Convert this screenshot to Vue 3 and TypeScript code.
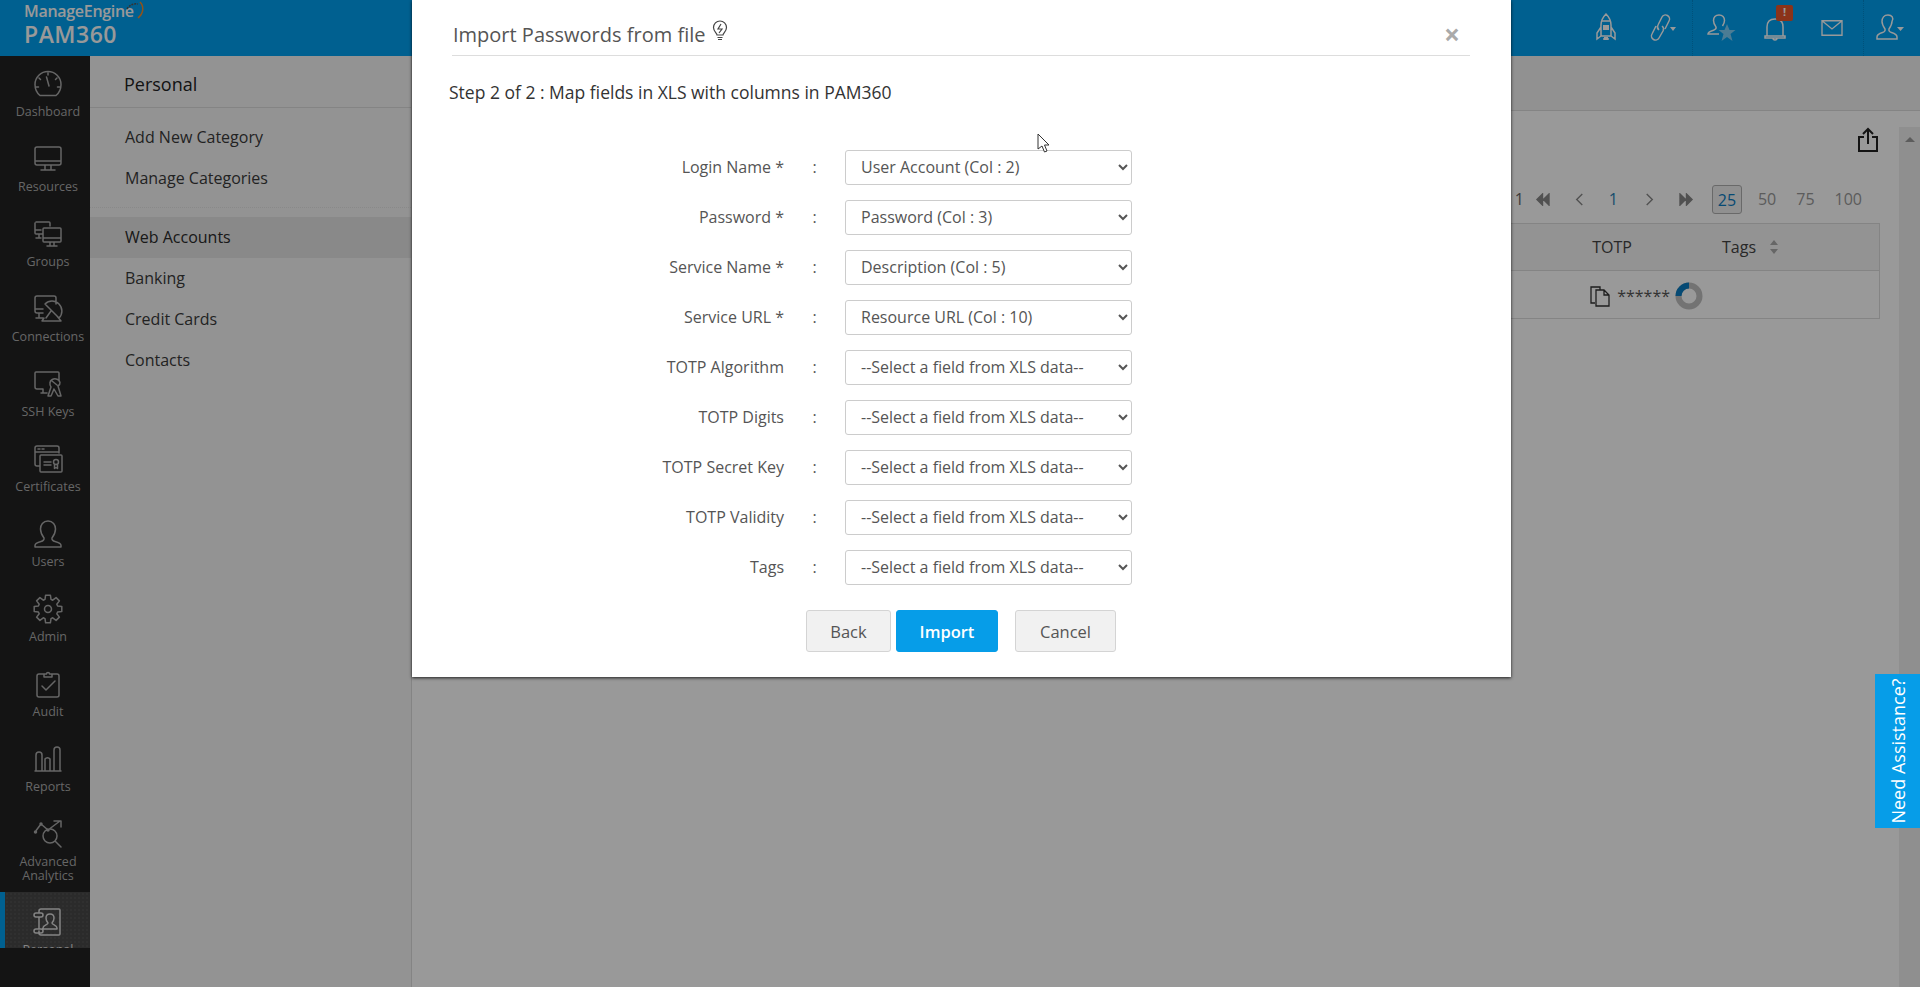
<script setup lang="ts">
interface NavItem {
  label: string;
  icon: string;
  active?: boolean;
}

// eight tooth cog, built from polar points so the teeth stay even
function gearPath(cx: number, cy: number, outer: number, inner: number): string {
  const pts: string[] = [];
  for (let i = 0; i < 8; i++) {
    const a = (i * Math.PI) / 4;
    const steps: [number, number][] = [
      [inner, a - 0.3],
      [outer, a - 0.17],
      [outer, a + 0.17],
      [inner, a + 0.3],
    ];
    for (const [r, t] of steps) {
      pts.push(`${(cx + r * Math.sin(t)).toFixed(1)} ${(cy - r * Math.cos(t)).toFixed(1)}`);
    }
  }
  return "M" + pts.join("L") + "Z";
}

const circle = (cx: number, cy: number, r: number) =>
  `M${cx - r} ${cy}a${r} ${r} 0 1 0 ${2 * r} 0a${r} ${r} 0 1 0 ${-2 * r} 0z`;

const navItems: NavItem[] = [
  {
    label: "Dashboard",
    icon: "M7 26.5h16c3-2.5 5-6.500 5-11C28 8 22 2.500 15 2.500S2 8 2 15.500c0 4.500 2 8.500 5 11zM13.500 8l2.500 9M15 4v2M6 9l1.500 1.500M24 9l-1.500 1.500M3.500 18h2M24.500 18h2",
  },
  {
    label: "Resources",
    icon: "M4 3h22a2 2 0 0 1 2 2v14a2 2 0 0 1-2 2H4a2 2 0 0 1-2-2V5a2 2 0 0 1 2-2zM2 17h26M12 21v4M18 21v4M8 26h14",
  },
  {
    label: "Groups",
    icon: "M3 3h13a1 1 0 0 1 1 1v3M9 15H3a1 1 0 0 1-1-1V4M2 11h6M6 15v3M3 19h5M11 9h16a1 1 0 0 1 1 1v12a1 1 0 0 1-1 1H11a1 1 0 0 1-1-1V10a1 1 0 0 1 1-1zM10 19h18M17 23v3M21 23v3M14 27h10",
  },
  {
    label: "Connections",
    icon: "M10 19H4a2 2 0 0 1-2-2V4a2 2 0 0 1 2-2h17a2 2 0 0 1 2 2v6M2 15h8M6 19v4M3 24h7M12 10l14 14a9.500 9.500 0 0 0-14-14zM18 17l-5 7M11 24l-2 3h19l-4-5",
  },
  {
    label: "SSH Keys",
    icon: "M10 20H4a2 2 0 0 1-2-2V4a1 1 0 0 1 1-1h22a1 1 0 0 1 1 1v8M8 24h6M10 20v4M17 14a5 4 0 1 1 8 3l3 10h-3l-4-7-3 7h-3l3-9a5 5 0 0 1-1-4zM19 12l5 4",
  },
  {
    label: "Certificates",
    icon: "M7 22H4a2 2 0 0 1-2-2V4a2 2 0 0 1 2-2h20a2 2 0 0 1 2 2v5M2 8h24M5 5h2M9 5h2M8 11h20a1 1 0 0 1 1 1v15a1 1 0 0 1-1 1H8a1 1 0 0 1-1-1V12a1 1 0 0 1 1-1zM11 18h7M11 21h7" +
      circle(23, 18, 2.5) + "M21.500 20.500v4l1.500-1 1.500 1v-4",
  },
  {
    label: "Users",
    icon: "M15 2c-5 0-7.500 4-7.500 8 0 4 2 7 3.500 9 .5 1.500-1 3-3 3.500-4 1-6 2.500-6 4v1.500h26V26.500c0-1.500-2-3-6-4-2-.5-3.500-2-3-3.500 1.500-2 3.500-5 3.500-9 0-4-2.500-8-7.500-8z",
  },
  {
    label: "Admin",
    icon: gearPath(15, 15, 14, 10) + circle(15, 15, 3.5),
  },
  {
    label: "Audit",
    icon: "M11 5H6a2 2 0 0 0-2 2v19a2 2 0 0 0 2 2h18a2 2 0 0 0 2-2V7a2 2 0 0 0-2-2h-5M11 8h8V5h-2.500a1.500 1.500 0 0 0-3 0H11zM9 17l4 4 9-9",
  },
  {
    label: "Reports",
    icon: "M3 27V11a3 3 0 0 1 6 0v16zM12 27V15a3 3 0 0 1 5 0v12zM21 27V6a3 3 0 0 1 6 0v21zM2 27h26",
  },
  {
    label: "Advanced Analytics",
    icon: "M2 13l6-8 7 6 12-9M21 2h7v6" + circle(17, 17, 7) + "M22 22l6 6" + circle(2.500, 13, 1) + circle(8, 5, 1) + circle(15, 11, 1),
  },
  {
    label: "Personal",
    active: true,
    icon: "M6 6V4a2 2 0 0 1 2-2h18a1 1 0 0 1 1 1v24a1 1 0 0 1-1 1H8a2 2 0 0 1-2-2v-2M6 10v12M3 6h5a2 2 0 0 1 0 4H3a2 2 0 0 1 0-4zM3 22h5a2 2 0 0 1 0 4H3a2 2 0 0 1 0-4zM17 7c-3 0-4 2-4 4 0 2 1 4 2 5 0 2-5 2-5 5v1h14v-1c0-3-5-3-5-5 1-1 2-3 2-5 0-2-1-4-4-4z",
  },
];

const topMenu = ["Add New Category", "Manage Categories"];
const categories = ["Web Accounts", "Banking", "Credit Cards", "Contacts"];

const placeholder = "--Select a field from XLS data--";
const fields = [
  { label: "Login Name *", value: "User Account (Col : 2)" },
  { label: "Password *", value: "Password (Col : 3)" },
  { label: "Service Name *", value: "Description (Col : 5)" },
  { label: "Service URL *", value: "Resource URL (Col : 10)" },
  { label: "TOTP Algorithm", value: placeholder },
  { label: "TOTP Digits", value: placeholder },
  { label: "TOTP Secret Key", value: placeholder },
  { label: "TOTP Validity", value: placeholder },
  { label: "Tags", value: placeholder },
];
</script>

<template>
  <div class="app">
    <header class="topbar">
      <div class="logo">
        <div class="logo-me">ManageEngine<svg class="logo-arc" viewBox="0 0 20 20"><path d="M2 8Q6 2 13 3" stroke="#555" stroke-dasharray="2 1" /><path d="M15 1C19 5 19 12 13 17" stroke="#f08a2c" /></svg></div>
        <div class="logo-pam">PAM360</div>
      </div>
      <div class="top-icons">
        <svg class="ti" viewBox="0 0 30 30"><path d="M15 1c-3 3-5 7-5 11v11h10V12c0-4-2-8-5-11zM10 14l-4 6v6l4-3M20 14l4 6v6l-4-3M12 26h6M11 8h8" /><path class="fillw" d="M12 12h6v5h-6zM13 24h4v3h-4z" /></svg>
        <svg class="ti link" viewBox="0 0 30 30">
          <path d="M14 13a4 4 0 0 1 1 5l-4 7a4 4 0 0 1-7-4l4-8M11 17a4 4 0 0 1-1-5l4-8a4 4 0 0 1 7 4l-4 8" />
          <path class="caret" d="M22 14h6l-3 4z" />
        </svg>
        <i class="dots"></i>
        <svg class="ti star-user" viewBox="0 0 30 30"><path d="M12 2c-3.500 0-5.500 2.500-5.500 5.500 0 3 1.500 5 2.500 6.500.5 1.500-.5 2.500-2.500 3.200C3 18.300 1 19.500 1 21h11M17.500 7.500C17.500 4.500 15.500 2 12 2M17.500 7.500c0 2-1 4-2 5.500" /><path class="star" d="M20 11l2.500 6h6l-5 4 2 7-5.500-4-5.500 4 2-7-5-4h6z" /></svg>
        <div class="bell">
          <svg class="ti" viewBox="0 0 30 30"><path d="M7 23v-9c0-5 3-8 8-8s8 3 8 8v9zM5 23h20v2H5zM13 25a2 2 0 0 0 4 0" /></svg>
          <span class="badge">!</span>
        </div>
        <svg class="ti mail" viewBox="0 0 26 22"><path d="M2 3h22v16H2zM2 3l11 9 11-9" /></svg>
        <i class="dots second"></i>
        <svg class="ti last" viewBox="0 0 30 30"><path d="M12 2C8 2 6 5 6 8.500c0 3 2 6 3 7.500.5 1.500-.5 3-2.500 3.500C3 20.500 1 22 1 24v2h20v-2c0-2-2-3.500-5.500-4.500-2-.5-3-2-2.500-3.500 1-1.500 3-4.500 3-7.500C18 5 16 2 12 2z" /><path class="caret" d="M21 14h7l-3.500 4z" /></svg>
      </div>
    </header>

    <div class="body">
      <aside class="sidebar">
        <nav class="nav">
          <a v-for="item in navItems" :key="item.label" class="nav-item" :class="{ active: item.active }">
            <svg class="nav-icon" viewBox="0 0 30 30"><path :d="item.icon" /></svg>
            <span class="nav-label">{{ item.label }}</span>
          </a>
        </nav>
      </aside>

      <section class="submenu">
        <h2 class="sub-title">Personal</h2>
        <div class="sub-group">
          <a v-for="m in topMenu" :key="m" class="sub-item">{{ m }}</a>
        </div>
        <div class="sub-cats">
          <a v-for="(c, i) in categories" :key="c" class="sub-item" :class="{ selected: i === 0 }">{{ c }}</a>
        </div>
      </section>

      <main class="main">
        <div class="strip"></div>
        <div class="content">
          <div class="work">
            <div class="toolbar">
              <svg class="export" viewBox="0 0 22 26"><path d="M7 10H2v14h18V10h-5M11 17V2M6 7l5-5 5 5" /></svg>
            </div>
            <div class="pager">
              <span class="pg-count">1</span>
              <svg class="pg-icon" viewBox="0 0 16 14"><path d="M8 1L2 7l6 6zM15 1L9 7l6 6z" /></svg>
              <svg class="pg-icon" viewBox="0 0 16 14"><path d="M11 1L5 7l6 6" fill="none" /></svg>
              <span class="pg-num">1</span>
              <svg class="pg-icon" viewBox="0 0 16 14"><path d="M5 1l6 6-6 6" fill="none" /></svg>
              <svg class="pg-icon" viewBox="0 0 16 14"><path d="M1 1l6 6-6 6zM8 1l6 6-6 6z" /></svg>
              <span class="pg-size current">25</span>
              <span class="pg-size">50</span>
              <span class="pg-size">75</span>
              <span class="pg-size">100</span>
            </div>
            <div class="table">
              <div class="thead">
                <span class="th-totp">TOTP</span>
                <span class="th-tags">Tags</span>
                <svg class="sort" viewBox="0 0 10 16"><path d="M5 1l4 5H1zM5 15l4-5H1z" /></svg>
              </div>
              <div class="trow">
                <svg class="copy" viewBox="0 0 22 22"><path d="M5 18H1V2h9v3M6 5h8l5 5v11H6zM14 5v5h5" /></svg>
                <span class="stars">******</span>
                <svg class="donut" viewBox="0 0 28 28">
                  <circle cx="14" cy="14" r="10.500" class="donut-bg" />
                  <path d="M3.500 14A10.500 10.500 0 0 1 14 3.500" class="donut-val" />
                </svg>
              </div>
            </div>
          </div>
          <div class="scrollbar"><i class="scroll-up"></i></div>
        </div>
      </main>
    </div>

    <div class="overlay"></div>

    <div class="modal">
      <div class="modal-head">
        <span class="modal-title">Import Passwords from file</span>
        <svg class="bulb" viewBox="0 0 16 21"><path d="M5 15c0-2-3.500-3.500-3.500-7.500a6.500 6.500 0 0 1 13 0C14.500 11.500 11 13 11 15zM5.500 17.500h5M6 19.500h4" /><path class="bolt" d="M9 4L6 9h4l-3 4" /></svg>
        <span class="close">&times;</span>
      </div>
      <p class="step">Step 2 of 2 : Map fields in XLS with columns in PAM360</p>
      <form class="form" @submit.prevent>
        <div v-for="f in fields" :key="f.label" class="row">
          <label class="row-label">{{ f.label }}</label>
          <span class="row-colon">:</span>
          <select class="row-select" :value="f.value">
            <option>{{ f.value }}</option>
          </select>
        </div>
        <div class="actions">
          <button type="button" class="btn">Back</button>
          <button type="button" class="btn primary">Import</button>
          <button type="button" class="btn cancel">Cancel</button>
        </div>
      </form>
    </div>

    <div class="assist"><span>Need Assistance?</span></div>

    <svg class="cursor" viewBox="0 0 14 20"><path d="M1 1v15l4-3 2.500 6 2.500-1-2.500-6H12z" /></svg>
  </div>
</template>

<style>
html,
body {
  margin: 0;
  height: 100%;
  overflow: hidden;
}
</style>

<style scoped>
.app {
  position: relative;
  width: 100%;
  height: 987px;
  display: flex;
  flex-direction: column;
  overflow: hidden;
  font-family: "Open Sans", "Liberation Sans", sans-serif;
  color: #333;
  background: #fff;
}

.topbar {
  height: 56px;
  flex: none;
  background: #00a0f0;
  display: flex;
  justify-content: space-between;
  color: #fff;
}
.logo {
  padding: 1px 0 0 24px;
}
.logo-me {
  position: relative;
  font-size: 16px;
  font-weight: 600;
  line-height: 20px;
  letter-spacing: -0.3px;
}
.logo-arc {
  position: absolute;
  left: 101px;
  top: 0;
  width: 20px;
  height: 20px;
  fill: none;
  stroke-width: 1.500;
}
.logo-pam {
  font-size: 23px;
  font-weight: 600;
  line-height: 26px;
  letter-spacing: 0.5px;
}
.top-icons {
  display: flex;
  align-items: center;
  padding-right: 14px;
}
.ti {
  width: 30px;
  height: 30px;
  fill: none;
  stroke: #fff;
  stroke-width: 1.500;
  margin-left: 27px;
}
.ti .caret {
  fill: #fff;
  stroke: none;
}
.ti .fillw {
  fill: #fff;
  stroke: none;
}
.ti .star {
  fill: #7fcff7;
  stroke: none;
}
.ti.mail {
  width: 24px;
  height: 20px;
  margin-left: 30px;
}
.ti.star-user {
  margin-left: 14px;
}
.ti.last {
  margin-left: 12px;
}
.dots {
  width: 0;
  height: 56px;
  margin-left: 14px;
  border-left: 1px dotted #0088cc;
}
.dots.second {
  margin-left: 19px;
}
.bell {
  position: relative;
  display: flex;
  margin-left: 23px;
}
.bell .ti {
  margin-left: 0;
}
.badge {
  position: absolute;
  left: 16px;
  top: -8px;
  width: 17px;
  height: 16px;
  border-radius: 2px;
  background: #e8552a;
  color: #fff;
  font-size: 11px;
  font-weight: 700;
  line-height: 13px;
  text-align: center;
}

.body {
  flex: 1;
  min-height: 0;
  display: flex;
}

.sidebar {
  width: 90px;
  flex: none;
  background: #222;
}
.nav {
  height: 892px;
  overflow: hidden;
}
.nav-item {
  display: flex;
  flex-direction: column;
  align-items: center;
  box-sizing: border-box;
  min-height: 75px;
  padding: 13px 0 9px 6px;
  color: #aaa;
}
.nav-item.active {
  background: radial-gradient(#505050 1px, #484848 1px) 0 0 / 4px 4px;
  border-left: 5px solid #00a0f0;
  padding-top: 15px;
  padding-left: 1px;
  color: #ddd;
}
.nav-icon {
  width: 30px;
  height: 30px;
  fill: none;
  stroke: currentColor;
  stroke-width: 1.500;
  stroke-linejoin: round;
  stroke-linecap: round;
}
.nav-label {
  margin-top: 6px;
  width: 84px;
  font-size: 12.500px;
  line-height: 14px;
  text-align: center;
}

.submenu {
  width: 322px;
  flex: none;
  box-sizing: border-box;
  background: #f5f5f5;
  border-right: 1px solid #ddd;
}
.sub-title {
  margin: 0;
  height: 51px;
  padding-left: 34px;
  border-bottom: 1px solid #ddd;
  font-size: 18px;
  font-weight: 400;
  line-height: 57px;
  color: #222;
}
.sub-group {
  padding: 9px 0 8px;
  border-bottom: 1px dotted #e4e4e4;
}
.sub-cats {
  padding-top: 9px;
}
.sub-item {
  display: block;
  height: 41px;
  padding-left: 35px;
  font-size: 16px;
  line-height: 40px;
  color: #3a3a3a;
}
.sub-item.selected {
  background: #e4e4e4;
  color: #2a2a2a;
}

.main {
  flex: 1;
  min-width: 0;
  display: flex;
  flex-direction: column;
}
.strip {
  height: 54px;
  flex: none;
  background: #f2f2f2;
  border-bottom: 1px solid #ddd;
}
.content {
  flex: 1;
  display: flex;
  min-height: 0;
}
.work {
  flex: 1;
  min-width: 0;
  padding: 16px 19px 0 0;
}
.toolbar {
  display: flex;
  justify-content: flex-end;
  height: 57px;
  padding-right: 1px;
}
.export {
  width: 22px;
  height: 26px;
  fill: none;
  stroke: #222;
  stroke-width: 2;
}
.pager {
  display: flex;
  justify-content: flex-end;
  align-items: center;
  height: 30px;
  padding-right: 18px;
  font-size: 16px;
  color: #999;
}
.pg-count {
  color: #666;
  margin-right: 11px;
}
.pg-icon {
  width: 15px;
  height: 13px;
  fill: #888;
  stroke: #888;
  stroke-width: 1.500;
  margin-right: 22px;
}
.pg-num {
  color: #2a80b5;
  margin-right: 24px;
}
.pg-size {
  margin-left: 20px;
}
.pg-size.current {
  margin-left: -4px;
  width: 30px;
  height: 29px;
  box-sizing: border-box;
  border: 1px solid #b0b0b0;
  border-radius: 3px;
  background: #f0f0f0;
  color: #0b7cc1;
  line-height: 28px;
  text-align: center;
}
.pg-size.current + .pg-size {
  margin-left: 16px;
}
.table {
  margin-top: 9px;
  border: 1px solid #ddd;
}
.thead {
  height: 46px;
  background: #f5f5f5;
  border-bottom: 1px solid #ddd;
  display: flex;
  align-items: center;
  justify-content: flex-end;
  font-size: 16px;
  color: #444;
}
.th-totp {
  margin-right: 90px;
}
.th-tags {
  margin-right: 13px;
}
.sort {
  width: 10px;
  height: 16px;
  fill: #aaa;
  margin-right: 100px;
}
.trow {
  height: 47px;
  box-sizing: border-box;
  padding: 2px 176px 0 0;
  display: flex;
  align-items: center;
  justify-content: flex-end;
}
.copy {
  width: 22px;
  height: 22px;
  fill: none;
  stroke: #333;
  stroke-width: 1.300;
}
.stars {
  margin: 0 5px;
  font-size: 16px;
  color: #555;
}
.donut {
  width: 28px;
  height: 28px;
  fill: none;
  stroke-width: 6;
}
.donut-bg {
  stroke: #c0c0c0;
}
.donut-val {
  stroke: #0b7cc1;
}
.scrollbar {
  width: 21px;
  flex: none;
  margin-top: 16px;
  background: #eee;
  display: flex;
  justify-content: center;
}
.scroll-up {
  margin-top: 10px;
  width: 0;
  height: 0;
  border: 5px solid transparent;
  border-top: 0;
  border-bottom: 5px solid #999;
}

.overlay {
  position: absolute;
  inset: 0;
  background: rgba(0, 0, 0, 0.4);
}

.modal {
  position: absolute;
  left: 412px;
  top: 0;
  width: 1099px;
  height: 677px;
  box-sizing: border-box;
  padding: 0 41px 0 37px;
  background: #fff;
  box-shadow: 0 1px 3px rgba(0, 0, 0, 0.8);
}
.modal-head {
  display: flex;
  align-items: center;
  box-sizing: border-box;
  height: 56px;
  padding-top: 13px;
  margin-left: 3px;
  border-bottom: 1px solid #ddd;
}
.modal-title {
  margin-left: 1px;
  font-size: 20px;
  color: #555;
}
.bulb {
  width: 16px;
  height: 21px;
  margin: -8px 0 0 7px;
  fill: none;
  stroke: #444;
  stroke-width: 1.200;
}
.close {
  margin-left: auto;
  margin-right: 10px;
  font-size: 28px;
  line-height: 28px;
  font-weight: 700;
  color: #aaa;
}
.step {
  margin: 24px 0 0;
  font-size: 17.500px;
  line-height: 24px;
  color: #333;
}
.form {
  margin-top: 38px;
}
.row {
  display: flex;
  align-items: center;
  height: 50px;
}
.row-label {
  width: 335px;
  text-align: right;
  font-size: 16px;
  color: #555;
}
.row-colon {
  width: 61px;
  text-align: center;
  font-size: 16px;
  color: #555;
}
.row-select {
  width: 287px;
  height: 35px;
  box-sizing: border-box;
  padding: 0 11px;
  border: 1px solid #ccc;
  border-radius: 3px;
  background: #fff;
  font-family: inherit;
  font-size: 16px;
  color: #555;
}
.actions {
  display: flex;
  margin: 18px 0 0 357px;
}
.btn {
  height: 42px;
  width: 85px;
  box-sizing: border-box;
  border: 1px solid #d4d4d4;
  border-radius: 3px;
  background: #f1f1f1;
  font-family: inherit;
  font-size: 16.500px;
  color: #555;
}
.btn.primary {
  width: 102px;
  margin-left: 5px;
  border-color: #069de8;
  background: #069de8;
  color: #fff;
  font-weight: 600;
}
.btn.cancel {
  width: 101px;
  margin-left: 17px;
}

.assist {
  position: absolute;
  right: 0;
  top: 674px;
  width: 45px;
  height: 154px;
  background: #069de8;
  color: #fff;
  display: flex;
  align-items: center;
  justify-content: center;
}
.assist span {
  font-size: 18px;
  white-space: nowrap;
  transform: rotate(-90deg);
}

.cursor {
  position: absolute;
  left: 1037px;
  top: 133px;
  width: 14px;
  height: 20px;
  fill: #fff;
  stroke: #333;
  stroke-width: 1;
}
</style>
